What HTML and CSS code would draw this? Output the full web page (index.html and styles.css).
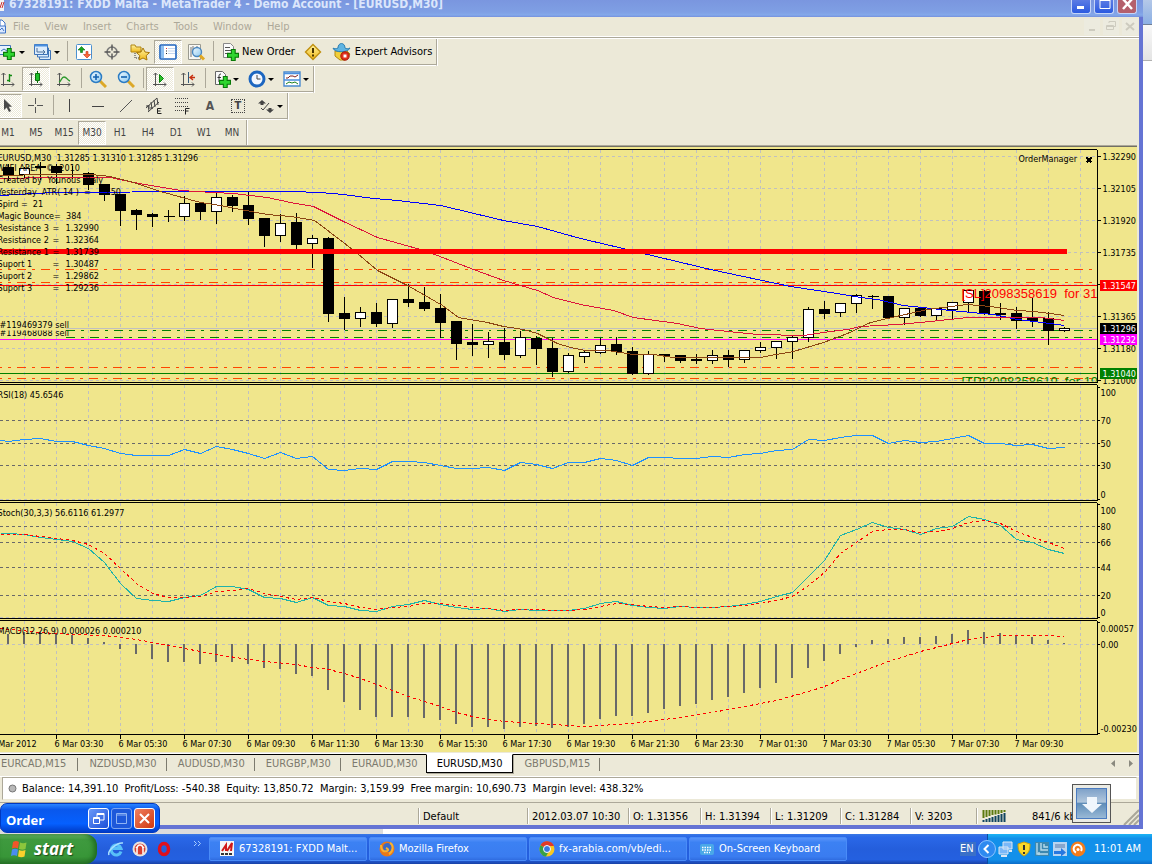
FILE: index.html
```html
<!DOCTYPE html>
<html lang="en">
<head>
<meta charset="utf-8">
<title>67328191: FXDD Malta - MetaTrader 4 - Demo Account - [EURUSD,M30]</title>
<link rel="stylesheet" href="styles.css">
</head>
<body>
<svg class="defs" aria-hidden="true">
  <defs>
    <linearGradient id="glass" x1="0" y1="0" x2="1" y2="1"><stop offset="0" stop-color="#f2fbff"/><stop offset="1" stop-color="#8cc8f0"/></linearGradient>
    <linearGradient id="gold" x1="0" y1="0" x2="0" y2="1"><stop offset="0" stop-color="#fff3a0"/><stop offset="1" stop-color="#f0b818"/></linearGradient>
    <symbol id="plus" viewBox="0 0 11 11"><path d="M4 .5h3.500v3.500h3v3.500H7.500v3H4v-3H.5V4H4z" fill="#2fd52f" stroke="#087a08"/></symbol>
    <symbol id="axes" viewBox="0 0 16 16"><path d="M3.500 15V2M1.500 4l2-2 2 2M1 13.500h13M12 11.500l2 2-2 2" fill="none" stroke="#555"/></symbol>
  </defs>
</svg>
<div class="workspace">
  <main class="app">
    <header class="titlebar">
      <svg width="8" height="12" viewBox="0 0 8 12"><path fill="#f4f4f4" d="M0 0h4v11H0z"/><path d="M0 8l2-6M2 8l2-6" stroke="#c33"/></svg>
      <h1>67328191: FXDD Malta - MetaTrader 4 - Demo Account - [EURUSD,M30]</h1>
      <div class="winbtns">
        <button class="wb" aria-label="Minimize"><svg width="17" height="17"><path d="M4 10h7v3H4z" fill="#fff"/></svg></button>
        <button class="wb" aria-label="Maximize"><svg width="17" height="17"><path d="M4 3.500h10v9H4z" fill="none" stroke="#fff"/><path d="M4 3h10v2H4z" fill="#fff"/></svg></button>
        <button class="wb close" aria-label="Close"><svg width="17" height="17"><path d="M4 3l9 10M13 3L4 13" stroke="#fff" stroke-width="2.500"/></svg></button>
      </div>
    </header>
    <nav class="menubar">
      <svg width="8" height="18" viewBox="0 0 8 18"><path d="M0 2h2l3 3v9H0z" fill="#fff" stroke="#3f74c8"/><path d="M0 8h5.500v7H0" fill="#dbe9ff" stroke="#3f74c8"/><path d="M0 12l2-2 2 3" fill="none" stroke="#3f74c8"/></svg>
      <button>File</button><button>View</button><button>Insert</button><button>Charts</button><button>Tools</button><button>Window</button><button>Help</button>
      <div class="mdi">
        <button aria-label="Minimize chart"><svg width="16" height="16"><path d="M5 10h6v2H5z" fill="#cdcbbf"/></svg></button>
        <button aria-label="Restore chart"><svg width="16" height="16"><path d="M6 4v-1.500h6.500v5H11M3.500 6.500h7v4h-7zM3 7.500h8" fill="none" stroke="#cdcbbf"/></svg></button>
        <button aria-label="Close chart"><svg width="16" height="16"><path d="M4 4l8 7M12 4l-8 7" stroke="#cdcbbf" stroke-width="2"/></svg></button>
      </div>
    </nav>
    <div class="toolbars">
      <div class="toolbar">
        <button class="tb drop" aria-label="New chart"><svg width="18" height="18"><path d="M.5 2.500h11v9H.5z" fill="#e6f2ff" stroke="#3f74b8"/><path d="M2 8l3-2 3 2" fill="none" stroke="#3f74b8"/><use href="#plus" x="4" y="5" width="12" height="12"/></svg></button>
        <button class="tb drop" aria-label="Profiles"><svg width="18" height="18"><g fill="#dcecfc" stroke="#3f74b8"><path d="M5.500 7.500h11v9h-11z"/><path d="M3.500 5h11v9h-11z"/><path d="M.5 1.500h13v10H.5z"/></g><path d="M.5 2.500h13" stroke="#4a90e0" stroke-width="2"/><path d="M3 5v4h8M9 7l2 2-2 2" fill="none" stroke="#4a6f9a"/></svg></button>
        <i class="sep"></i>
        <button class="tb" aria-label="Market Watch"><svg width="18" height="18"><rect x="1.500" y="1.500" width="15" height="15" rx="1" fill="#fff" stroke="#4a90d0"/><path d="M6.500 3.500l3.500 3.500H7.500v2.500h-2V7H3z" fill="#19a51c" stroke="#0a6d10" stroke-width=".6"/><path d="M12 15l-3.500-3.500h2.500V8.500h2v3h2.500z" fill="#ff6a3a" stroke="#c03010" stroke-width=".6"/></svg></button>
        <button class="tb" aria-label="Data Window"><svg width="18" height="18"><circle cx="9" cy="9" r="5" fill="none" stroke="#777" stroke-width="1.500"/><path d="M9 1.500v6M9 10.500v6M1.500 9h6M10.500 9h6" stroke="#555" stroke-width="1.400"/></svg></button>
        <button class="tb" aria-label="Navigator"><svg width="20" height="18"><path d="M1 2h4l1 2h5v5H1z" fill="url(#gold)" stroke="#b08510"/><path d="M5 10v5h4" fill="none" stroke="#333" stroke-dasharray="1 1"/><path d="M13 5l2 4 4.500.6-3.300 3 .8 4.400-4-2-4 2 .8-4.400-3.300-3L11 9z" fill="url(#gold)" stroke="#a87808"/></svg></button>
        <button class="tb on" aria-label="Terminal"><svg width="18" height="18"><rect x="1" y="2" width="16" height="14" rx="1" fill="#fff" stroke="#1f64c0" stroke-width="1.600"/><path d="M2 3h3v12H2z" fill="#8fc0f0"/><path d="M7 5.500h1" stroke="#e03030"/><path d="M7 8h1M7 10.500h1" stroke="#222"/><path d="M9 5.500h7M9 8h7M9 10.500h7" stroke="#c4d6ee"/></svg></button>
        <button class="tb" aria-label="Strategy Tester"><svg width="20" height="18"><path d="M2.500 1.500h12v15h-12z" fill="#f8f8f4" stroke="#9a9a90"/><path d="M5 4v10M7 3v4M11 3v3" stroke="#777"/><circle cx="11" cy="9" r="4.500" fill="url(#glass)" stroke="#4a88c0" stroke-width="1.400"/><path d="M14 12.500l4 4" stroke="#e0a820" stroke-width="3"/></svg></button>
        <i class="sep"></i>
        <button class="tb wide"><svg width="18" height="18"><path d="M2.500.5h7l3 3v11h-10z" fill="#fafafa" stroke="#888"/><path d="M4 4.500h5M4 7.500h7M4 10.500h5" stroke="#555"/><use href="#plus" x="6" y="6" width="12" height="12"/></svg><span>New Order</span></button>
        <button class="tb" aria-label="MetaEditor"><svg width="18" height="18"><path d="M9 1.500L16.500 9 9 16.500 1.500 9z" fill="url(#gold)" stroke="#c09010" stroke-width="1.400"/><path d="M9 5v5M9 11.500v2" stroke="#4a3500" stroke-width="2"/></svg></button>
        <button class="tb wide"><svg width="20" height="18"><path d="M3 8h12l3 3-5 6H8l-5-4z" fill="#f2cf3a" stroke="#b58a10"/><path d="M1 5c1 5 15 5 17 0-2 1-4 1-5 0 0-6-7-6-7 0-2 1-4 1-5 0z" fill="#5fb4e2" stroke="#2d7eb0"/><circle cx="13" cy="13" r="4.200" fill="#e2321c" stroke="#a51505"/><path d="M11.500 11.500h3v3h-3z" fill="#fff"/></svg><span>Expert Advisors</span></button>
      </div>
      <div class="toolbar">
        <button class="tb" aria-label="Bar chart"><svg width="16" height="16"><use href="#axes" width="16" height="16"/><path d="M9.500 3v8M7 9.500h2.500M9.500 4.500H12" stroke="#138a13" stroke-width="1.400"/></svg></button>
        <button class="tb on" aria-label="Candlesticks"><svg width="16" height="16"><use href="#axes" width="16" height="16"/><path d="M9.500 0v12" stroke="#0a700a"/><path d="M7.500 2.500h4v7h-4z" fill="#1fbf2a" stroke="#0a700a"/></svg></button>
        <button class="tb" aria-label="Line chart"><svg width="16" height="16"><use href="#axes" width="16" height="16"/><path d="M3 11c3-1 2-5 5-5s3 3 6 4" fill="none" stroke="#2f9a2f" stroke-width="1.400"/></svg></button>
        <i class="sep"></i>
        <button class="tb" aria-label="Zoom in"><svg width="18" height="18"><path d="M11 11l6 6" stroke="#dca828" stroke-width="3"/><circle cx="7" cy="7" r="5.500" fill="url(#glass)" stroke="#2c7cc4" stroke-width="1.500"/><path d="M4 7h6M7 4v6" stroke="#1462b0" stroke-width="1.600"/></svg></button>
        <button class="tb" aria-label="Zoom out"><svg width="18" height="18"><path d="M11 11l6 6" stroke="#dca828" stroke-width="3"/><circle cx="7" cy="7" r="5.500" fill="url(#glass)" stroke="#2c7cc4" stroke-width="1.500"/><path d="M4 7h6" stroke="#1462b0" stroke-width="1.600"/></svg></button>
        <i class="sep"></i>
        <button class="tb on" aria-label="Auto scroll"><svg width="16" height="16"><use href="#axes" width="16" height="16"/><path d="M7.500 3.500l4 4-4 4z" fill="#2dc02d" stroke="#0a800a"/></svg></button>
        <button class="tb" aria-label="Chart shift"><svg width="16" height="16"><use href="#axes" width="16" height="16"/><path d="M8.500 1v11" stroke="#345a7c"/><path d="M15 6.500h-5M13 4l-3 2.500L13 9" fill="none" stroke="#c83010" stroke-width="1.400"/></svg></button>
        <i class="sep"></i>
        <button class="tb drop" aria-label="Indicators"><svg width="18" height="18"><path d="M2.500 1.500h7l3 3v10h-10z" fill="#fafafa" stroke="#666"/><path d="M8 4c-2 0-2 1-2 3v5M4.500 7.500h3.500" fill="none" stroke="#333"/><use href="#plus" x="6" y="6" width="12" height="12"/></svg></button>
        <button class="tb drop" aria-label="Periods"><svg width="18" height="18"><circle cx="9" cy="9" r="7" fill="#f2f7ff" stroke="#1c66c0" stroke-width="3"/><path d="M9 5v4h3.500" fill="none" stroke="#444"/></svg></button>
        <button class="tb drop" aria-label="Templates"><svg width="18" height="18"><path d="M1 2h16v14H1z" fill="#fff" stroke="#4a8ad0" stroke-width="1.400"/><path d="M1 3.500h16M1 10h16" stroke="#4a90e0" stroke-width="1.400"/><path d="M3 8h2l2-2h3l2 1 3-2" fill="none" stroke="#802020"/><path d="M3 14l3-2 3 1 3-1 3 2" fill="none" stroke="#208020"/></svg></button>
      </div>
      <div class="toolbar">
        <button class="tb on" aria-label="Cursor"><svg width="16" height="16"><path d="M4 1v11l2.700-2.500L9 14l2-1-2.300-4.200H12z" fill="#4a4a4a"/></svg></button>
        <button class="tb" aria-label="Crosshair"><svg width="16" height="16"><path d="M7.500 0v6M7.500 9v6M0 7.500h6M9 7.500h6" stroke="#555"/></svg></button>
        <i class="sep"></i>
        <button class="tb" aria-label="Vertical line"><svg width="16" height="16"><path d="M7.500 1v13" stroke="#444"/></svg></button>
        <button class="tb" aria-label="Horizontal line"><svg width="16" height="16"><path d="M2 8.500h12" stroke="#444"/></svg></button>
        <button class="tb" aria-label="Trendline"><svg width="16" height="16"><path d="M2 14L14 2" stroke="#555"/></svg></button>
        <button class="tb" aria-label="Equidistant channel"><svg width="18" height="18"><path d="M1 11L12 1M3 15L14 5M3 8l1 6M6 5l1 7M9 3l1 7M12 1l1 7M1 9h4M4 11h4" stroke="#444"/><path d="M16.500 11.500h-4v5h4M12.500 14h3" fill="none" stroke="#222"/></svg></button>
        <button class="tb" aria-label="Fibonacci retracement"><svg width="18" height="18"><path d="M2 1.500h14M2 5.500h14M2 9.500h14M2 13.500h9" stroke="#444" stroke-dasharray="1 1"/><path d="M16.500 11.500h-4v6M12.500 14h3" fill="none" stroke="#222"/></svg></button>
        <button class="tb letter">A</button>
        <button class="tb boxed" aria-label="Text label"><b>T</b></button>
        <button class="tb drop" aria-label="Arrows"><svg width="18" height="18"><path d="M5 3l4 3.500H6.500V8h-3V6.500H1zM13 16l-4-3.500h2.500V11h3v1.500H17z" fill="#444"/><path d="M4 11l2 2 6-7" fill="none" stroke="#444"/></svg></button>
      </div>
      <div class="toolbar last">
        <button class="tb">M1</button><button class="tb">M5</button><button class="tb">M15</button><button class="tb on">M30</button><button class="tb">H1</button><button class="tb">H4</button><button class="tb">D1</button><button class="tb">W1</button><button class="tb">MN</button>
      </div>
    </div>
    <section class="chart" aria-label="EURUSD,M30 chart">
      <svg class="plot" id="plot"></svg>
      <svg class="axis" id="axis"></svg>
    </section>
    <nav class="tabs">
      <button>EURCAD,M15</button><button>NZDUSD,M30</button><button>AUDUSD,M30</button><button>EURGBP,M30</button><button>EURAUD,M30</button><button class="active">EURUSD,M30</button><button>GBPUSD,M15</button>
      <span class="scroll"><svg width="24" height="8"><path d="M5 0v7L1 3.500zM19 0v7l4-3.500z" fill="#8a897f"/></svg></span>
    </nav>
    <div class="account"><svg width="9" height="9"><circle cx="4.500" cy="4.500" r="3.500" fill="#b8b8b8" stroke="#777"/></svg><p>Balance: 14,391.10&nbsp; Profit/Loss: -540.38&nbsp; Equity: 13,850.72&nbsp; Margin: 3,159.99&nbsp; Free margin: 10,690.73&nbsp; Margin level: 438.32%</p></div>
    <footer class="status">
      <span class="s-help"></span><span class="s-prof">Default</span><span class="s-date">2012.03.07 10:30</span><span class="s-val">O: 1.31356</span><span class="s-val">H: 1.31394</span><span class="s-val">L: 1.31209</span><span class="s-val">C: 1.31284</span><span class="s-vol">V: 3203</span>
      <span class="s-conn"><svg width="24" height="13"><path d="M1.500 0v8M4.500 0v7M7.500 0v6M10.500 0v5M13.500 0v4.500M16.500 0v4M19.500 0v3M22.500 0v2" stroke="#5c7a10" stroke-width="2"/><path d="M1.500 10v2M4.500 9v3M7.500 8v4M10.500 7v5M13.500 6v6M16.500 5v7M19.500 4v8M22.500 3v9" stroke="#104560" stroke-width="2"/></svg><em>841/6 kb</em></span>
      <svg class="grip" width="16" height="16"><path d="M1 16L16 1M6 16L16 6M11 16l5-5" stroke="#a9a799" stroke-width="2"/></svg>
    </footer>
    <button class="download" aria-label="Download"><svg width="32" height="32"><path d="M11 9h10v7h5L16 25 6 16h5z" fill="#f0f6fc"/></svg></button>
    <aside class="order"><h2>Order</h2>
      <button aria-label="Restore"><svg width="19" height="19"><path d="M8 8V4.500h7V11h-4M4.500 8.500h6v6h-6zM4 9.500h7M8 5.500h7" fill="none" stroke="#fff"/></svg></button>
      <button class="dim" aria-label="Maximize"><svg width="19" height="19"><path d="M4.500 4.500h10v10h-10zM4 6h11" fill="none" stroke="#8fb4f4"/></svg></button>
      <button class="x" aria-label="Close"><svg width="19" height="19"><path d="M5 5l9 9M14 5l-9 9" stroke="#fff" stroke-width="2"/></svg></button>
    </aside>
  </main>
  <div class="behind"><i></i><b></b></div>
</div>
<div class="strip"></div>
<footer class="taskbar">
  <button class="start"><svg width="20" height="20"><path d="M3 3c3-1.500 4-1 6 0L8 9.500C6 8.500 4.500 8.500 2 9.500z" fill="#f0562a"/><path d="M10 3.500c2 1 4 1 6.500 0L15.500 10c-2 1-4 1-6.500 0z" fill="#8cc63c"/><path d="M2 10.500c2-1 4-1 6 0L7 17c-2-1-4-1-6 0z" fill="#4a8cf0"/><path d="M9 11c2 1 4 1 6.500 0l-1 6.500c-2 1-4 1-6.500 0z" fill="#fbd02c"/></svg><span>start</span></button>
  <div class="quick">
    <button aria-label="Internet Explorer"><svg width="16" height="16"><path d="M13 10.500A5 5 0 1 1 13 7.500H4.500" fill="none" stroke="#58c0f8" stroke-width="3"/><path d="M1 14C-1 10 9 1 15 2" fill="none" stroke="#a8e0ff" stroke-width="1.500"/></svg></button>
    <button aria-label="Toolbar app"><svg width="16" height="16"><circle cx="8" cy="8" r="7.500" fill="#e8e4e0"/><circle cx="8" cy="8" r="5.500" fill="#d84030"/><path d="M5 13V8c0-2 1-4 3-4s3 2 3 4v5M4 7l2-2M12 7l-2-2" fill="none" stroke="#fff" stroke-width="1.500"/></svg></button>
    <button aria-label="Opera"><svg width="16" height="16"><ellipse cx="8" cy="8" rx="4.500" ry="5.500" fill="none" stroke="#e0101c" stroke-width="3.500"/></svg></button>
    <svg class="more" width="9" height="7"><path d="M1 1l2.500 2.500L1 6M5 1l2.500 2.500L5 6" fill="none" stroke="#a8ccff"/></svg>
  </div>
  <div class="tasks">
    <button><svg width="16" height="16"><path d="M1 0h14v15H1z" fill="#f4f4f4"/><path d="M3 10l4-6v6M8 10l5-8-1 8" stroke="#d01818" stroke-width="2" fill="none"/><path d="M2 13h12" stroke="#333" stroke-dasharray="3 1" stroke-width="2"/></svg><span>67328191: FXDD Malt...</span></button>
    <button><svg width="16" height="16"><circle cx="8" cy="8" r="7.500" fill="#e8781a"/><circle cx="8.500" cy="6.500" r="4.500" fill="#3a6ac8"/><path d="M2 4c0 6 3 7 6 6 2-1 1-2-1-3M11 2c4 2 3 9-1 11" fill="none" stroke="#f8b030" stroke-width="2"/></svg><span>Mozilla Firefox</span></button>
    <button><svg width="16" height="16"><circle cx="8" cy="8" r="7.500" fill="#f8c820"/><path d="M8 8L1.500 4.200A7.500 7.500 0 0 1 15 5H8z" fill="#e03a28"/><path d="M8 8L1.500 4.200A7.500 7.500 0 0 0 7 15.500L10 10z" fill="#38a048"/><circle cx="8" cy="8" r="3.500" fill="#3a78e0" stroke="#fff"/></svg><span>fx-arabia.com/vb/edi...</span></button>
    <button><svg width="16" height="16"><rect x="1" y="3" width="14" height="11" rx="2" fill="#4aa8e8"/><path d="M3 6.500h10M3 9h10M5 11.500h6" stroke="#fff" stroke-width="1.500" stroke-dasharray="1.500 1"/></svg><span>On-Screen Keyboard</span></button>
  </div>
  <span class="lang">EN</span>
  <div class="tray">
    <button class="hide" aria-label="Hide icons"><svg width="18" height="18"><circle cx="9" cy="9" r="8.500" fill="#2d8af0" stroke="#8cc4ff"/><path d="M10.500 5L6.500 9l4 4" fill="none" stroke="#fff" stroke-width="2"/></svg></button>
    <svg width="16" height="16"><path d="M5 1h9v7H5zM1 6h9v7H1z" fill="#7ab8f8" stroke="#dce8f4"/><path d="M3 15h6M11 10h3" stroke="#dce8f4" stroke-width="2"/></svg>
    <svg width="16" height="16"><path d="M8 1l6 2c0 6-1 9-6 12C3 12 2 9 2 3z" fill="#fbd828" stroke="#c8a010"/><path d="M8 4v5M8 11v2" stroke="#333" stroke-width="2"/></svg>
    <svg width="16" height="16"><path d="M1 1h14v14H1z" fill="#3c88b0"/><path d="M3 2v11h11M7 2v7h7M10 3v3h4M5 11v3" fill="none" stroke="#b8dcec" stroke-width="1.400"/></svg>
    <svg width="16" height="16"><path d="M1 1h14v14H1z" fill="#b8d4f0"/><path d="M3 4h10M3 6h10" stroke="#5878a8"/><path d="M2 10h7V7l5 4.500-5 4V13H2z" fill="#2878e0"/></svg>
    <svg width="16" height="16"><circle cx="8" cy="8" r="7.500" fill="#f47c1c"/><path d="M6 11.500a4 4 0 1 1 5-1.500" fill="none" stroke="#fff" stroke-width="2"/><circle cx="8" cy="8.500" r="1.500" fill="#fff"/></svg>
    <time>11:01 AM</time>
  </div>
</footer>
<script src="chart.js"></script>
</body>
</html>
```
FILE: styles.css
```css
* { box-sizing: border-box; }
html { overflow: hidden; }
body {
  margin: 0;
  min-height: 100vh;
  display: flex;
  flex-direction: column;
  background: #fff;
  color: #000;
  font: 11px/14px "DejaVu Sans Condensed", "Liberation Sans", sans-serif;
  overflow: hidden;
}
button { font: inherit; color: inherit; background: none; border: 0; padding: 0; margin: 0; }
svg { display: block; flex: none; }
h1, h2, p { margin: 0; }
.defs { position: absolute; width: 0; height: 0; }
.workspace { display: flex; flex: 1; }
.app {
  position: relative;
  flex: 1;
  min-width: 0;
  display: flex;
  flex-direction: column;
  background: #ece9d8;
  border-right: 4px solid #6574d4;
  border-bottom: 4px solid #6574d4;
}
.behind { width: 9px; display: flex; flex-direction: column; background: #fff; }
.behind i { height: 25px; background: linear-gradient(#b4c8e8, #8cb0e4); border-bottom: 1px solid #6f7f95; }
.behind b { height: 36px; background: linear-gradient(#f8f8f8, #e4e4e4); border-bottom: 1px solid #b0b0b0; }

.titlebar {
  display: flex;
  height: 17px;
  margin-right: -4px;
  padding-right: 6px;
  background: linear-gradient(#7a96df, #7f9fe4 70%, #84a9ea 88%, #7590dd);
}
.titlebar h1 {
  flex: 1;
  padding-left: 1px;
  font: bold 12px/15px "DejaVu Sans Condensed", "Liberation Sans", sans-serif;
  height: 17px;
  margin-top: -3px;
  color: #dbe6fb;
  white-space: nowrap;
}
.winbtns { display: flex; gap: 3px; }
.wb { width: 20px; height: 14px; display: flex; align-items: flex-end; justify-content: center; overflow: hidden; background: linear-gradient(#5c7ce4, #2b5ae0); border: 1px solid #c4d4f8; border-top: 0; border-radius: 0 0 3px 3px; }
.wb.close { background: #b4606c; }

.menubar {
  display: flex;
  align-items: center;
  gap: 15px;
  height: 19px;
  padding-top: 1px;
  color: #aca899;
}
.menubar > svg { margin-right: -10px; }
.mdi { margin-left: auto; display: flex; gap: 3px; padding-right: 1px; }
.mdi button { background: #ecebdf; }

.toolbars { border-top: 1px solid #fff; box-shadow: inset 0 1px #aca899, inset 0 2px #fff; padding-top: 2px; overflow: hidden; }
.toolbar {
  display: flex;
  width: max-content;
  margin-left: -6px;
  height: 27px;
  border-right: 1px solid #aca899;
  border-bottom: 1px solid #fff;
  box-shadow: inset 0 -1px #aca899, 1px 0 #fff;
  padding: 1px 0;
}
.toolbar.last { height: 25px; border-bottom: 0; box-shadow: 1px 0 #fff; padding-bottom: 0; font-size: 10px; color: #444; }
.tb { width: 28px; height: 24px; display: flex; align-items: center; justify-content: center; }
.tb.on {
  border: 1px solid #aca899;
  border-right-color: #fff;
  border-bottom-color: #fff;
  background: repeating-conic-gradient(#fff 0 25%, #ece9d8 0 50%) 0 0 / 2px 2px;
}
.tb.drop { width: 35px; justify-content: flex-start; padding-left: 5px; gap: 2px; }
.tb.drop::after { content: ""; border: 3px solid transparent; border-top-color: #000; border-bottom: 0; }
.tb.wide { width: auto; padding: 0 4px 0 5px; gap: 3px; }
.tb.letter { font-weight: bold; font-size: 12px; color: #555; }
.tb.boxed b { width: 14px; height: 14px; line-height: 12px; border: 1px dotted #444; color: #444; }
.sep { width: 6px; margin: 1px 0 3px; background: linear-gradient(#aca899, #aca899) 3px 0 / 1px 100% no-repeat; }

.chart {
  display: flex;
  height: 607px;
  margin-right: 2px;
  border-top: 1px solid #aca899;
  box-shadow: inset 0 1px #716f64;
  padding-top: 1px;
  background: #f0e68c;
}
.plot { flex: 1; min-width: 0; width: 0; height: 605px; overflow: hidden; }
.axis { width: 40px; height: 605px; overflow: hidden; }
.plot text, .axis text { font: 9px "DejaVu Sans Condensed", "Liberation Sans", sans-serif; white-space: pre; }
.plot text.tag { font: 13px "Liberation Sans", Arial, sans-serif; }

.tabs {
  display: flex;
  height: 23px;
  margin-top: 2px;
  border-top: 1px solid #000;
  border-bottom: 1px solid #fff;
  color: #7c7a6e;
  box-shadow: 0 -1px #fff;
}
.tabs button { height: 17px; padding: 0 10px 0 11px; background: linear-gradient(#7c7a6e, #7c7a6e) right 3px / 1px 13px no-repeat; }
.tabs button:first-child { padding-left: 1px; padding-right: 12px; }
.tabs button:nth-child(5) { background: none; padding-right: 8px; }
.tabs button.active { height: 19px; margin-top: -1px; color: #000; background: #fff; border: 1px solid #000; border-top-color: #fff; box-shadow: 1px 1px #aca899; padding: 0 10px; }
.tabs button:last-of-type { padding: 0 10px 0 11px; }
.scroll { margin: 5px 5px 0 auto; }
.account {
  display: flex;
  align-items: center;
  gap: 5px;
  height: 23px;
  margin: 0 2px;
  padding-left: 5px;
  background: #fff;
  border: 1px solid #aca899;
  border-right-color: #ece9d8;
  border-bottom-color: #ece9d8;
  white-space: nowrap;
}
.status { display: flex; align-items: center; height: 23px; margin-top: 2px; padding-top: 4px; border-top: 1px solid #aca899; white-space: nowrap; }
.status span { height: 16px; line-height: 17px; padding-left: 4px; border-right: 1px solid #aca899; box-shadow: 1px 0 #fff; }
.status .s-help { width: 419px; flex: 0 1 419px; }
.s-prof { width: 109px; }
.s-date { width: 101px; }
.s-val { width: 72px; }
.s-val:nth-of-type(n+5) { width: 70px; }
.status .s-vol { width: 66px; }
.status .s-conn { display: flex; align-items: center; gap: 26px; flex: 1; border: 0; padding-left: 5px; box-shadow: none; }
.status em { font-style: normal; }
.grip { align-self: flex-end; }
.download { position: absolute; right: 28px; bottom: 2px; width: 39px; height: 39px; padding: 3px; background: #ebebe4; border: 1px solid #555; }
.download svg { background: linear-gradient(#7b9fc8, #b0c6dc 45%, #5f8db8 50%, #9dbcd8); outline: 1px solid #4a7bc0; outline-offset: -1px; width: 31px; height: 31px; }
.order {
  position: absolute;
  left: 0;
  bottom: -8px;
  width: 160px;
  height: 30px;
  display: flex;
  align-items: center;
  gap: 2px;
  padding: 0 4px 0 5px;
  border: 1px solid #0038c0;
  border-radius: 7px;
  color: #fff;
  background: linear-gradient(#2a84ff, #0a58ec 20%, #0560ff 70%, #003cc8);
}
.order h2 { flex: 1; padding-top: 3px; font: bold 13px/18px "Open Sans", sans-serif; }
.order button { width: 21px; height: 21px; border: 1px solid #fff; border-radius: 3px; background: linear-gradient(135deg, #6a98f8, #1c50d8); }
.order .dim { border-color: #7ca4f0; background: #1d58da; }
.order .x { background: linear-gradient(135deg, #f08060, #d03810); }
.strip { height: 5px; background: linear-gradient(#dcdcdc, #dcdcdc) 0 0 / 383px 100% no-repeat #fff; }

.taskbar { display: flex; height: 30px; color: #fff; background: linear-gradient(#3a78e4, #2a68e8 10%, #245edc 50%, #2460e0 85%, #1941a5); }
.start { display: flex; align-items: center; gap: 4px; width: 97px; padding-left: 10px; border-radius: 0 12px 12px 0; background: linear-gradient(#70b870, #3f9a3f 18%, #389638 75%, #2a762a); box-shadow: inset -3px 0 5px #1f6a1f; }
.start span { font: italic bold 17px/22px "Open Sans", sans-serif; text-shadow: 1px 1px 1px #1b4d1b; }
.quick { display: flex; align-items: center; gap: 8px; width: 111px; padding-left: 11px; }
.more { margin: -12px 0 0 13px; }
.tasks { display: flex; flex: 1; gap: 2px; padding: 3px 0 3px 1px; min-width: 0; }
.tasks button { display: flex; align-items: center; gap: 4px; width: 158px; padding-left: 9px; border: 1px solid #4a8cf8; border-radius: 2px; background: linear-gradient(#5a94fa, #3c81f3 20%, #3a7cf0 85%, #2f6ce0); }
.tasks span { white-space: nowrap; }
.lang { align-self: center; width: 16px; margin-right: 11px; background: #3a70c8; }
.tray { display: flex; align-items: center; gap: 2px; width: 165px; background: linear-gradient(#1cb4f4, #1290ea 15%, #1290ea 85%, #0c6cc8); border-left: 1px solid #0a4ea0; }
.tray .hide { margin-left: -10px; }
.tray time { margin-left: 6px; white-space: nowrap; }
```
FILE: chart.js
```js
// Draws the price, RSI, stochastic and MACD panes.
const NS = 'http://www.w3.org/2000/svg';
const TOP = 147;
const STEP = 16, FIRST = 8, LAST_X = 1097;

// Candles: colour, high, open/close top, open/close bottom, low.
const candles = [
  'b163,167,175,180','w166,168,175,178','b161,166,168,179','b163,166,173,183','b165,174,175,178','b171,173,185,189',
  'b184,184,195,200','b194,194,211,225','b208,210,215,229','b212,214,217,226','b209,216,217,221','w195,203,217,220',
  'b201,203,212,219','w191,197,212,223','b194,197,206,211','b191,205,219,224','b218,218,236,246','w213,223,236,241',
  'b212,222,245,249','w234,238,244,267','b236,238,314,321','b296,313,319,329','w306,312,319,326','b302,312,324,326',
  'w298,299,324,327','b283,299,303,306','b286,302,309,310','b293,308,323,337','b321,321,344,359','b323,342,345,355',
  'w331,341,345,357','b327,342,355,359','w330,337,356,357','b335,338,349,364','b337,348,372,376','w352,355,372,372',
  'w349,352,357,362','w337,345,353,353','b336,344,352,354','b346,351,374,374','w350,354,374,374','b353,354,356,361',
  'b354,355,361,362','b353,359,361,363','w349,355,361,363','b349,355,360,366','w350,350,360,362','w341,347,351,352',
  'w340,341,348,358','w334,337,342,358','w306,309,338,341','b300,309,314,318','w303,303,313,316','w293,295,304,312',
  'b294,296,297,308','b296,296,318,318','w307,308,318,324','b306,308,316,316','w308,308,316,319','w301,302,310,319',
  'w290,290,303,312','b289,291,314,314','b302,313,315,319','b306,313,321,328','b297,318,321,326','b311,318,331,344',
  'w326,328,331,331'
];
const blue = '0,195 33,193 57,192 207,191 290,191 320,192 343,194 373,198 397,200 440,205 457,209 503,220 537,226 580,238 627,249 647,254 710,269 790,286 830,292 860,297 877,299 903,305 950,310 993,314 1017,319 1050,323 1064,325';
const crimson = '0,178 50,177 110,177 133,182 180,190 213,192 233,193 267,197 290,202 313,206 343,221 377,237 420,249 437,255 473,269 503,280 537,290 553,297 580,304 613,310 633,317 677,323 700,328 737,332 757,334 803,335 823,332 847,329 860,326 897,324 930,321 967,317 1040,317 1064,320';
const brown = '0,175 47,174 90,174 110,176 133,182 160,191 200,202 220,205 240,209 267,214 290,216 314,220 343,242 357,253 377,270 407,285 442,305 458,317 487,322 503,326 523,329 537,333 557,343 570,347 585,350 607,350 633,354 653,354 673,357 760,357 770,355 793,351 823,342 847,333 870,322 887,318 927,309 950,306 967,304 990,306 1017,310 1033,311 1050,313 1064,315';
const rsi = [441,439,438,441,441,445,448,453,455,455,455,449,453,446,449,453,458,452,458,456,469,470,468,469,461,461,462,465,468,468,467,470,462,464,468,462,462,458,460,465,457,457,458,458,456,457,454,453,450,449,439,440,437,435,435,443,440,442,441,438,435,443,443,445,444,448,447];
const stoch = [533,534,537,539,541,548,562,583,598,600,601,597,595,586,586,589,597,598,602,597,605,606,610,611,606,604,600,604,607,609,608,611,609,610,610,610,608,603,601,605,607,608,606,607,607,606,604,601,596,592,576,560,535,529,522,527,529,534,528,526,516,519,525,539,542,549,553];
const signal = [534,534,536,538,540,544,553,568,583,593,597,597,596,591,590,588,593,596,599,597,601,603,607,609,607,606,603,603,605,607,608,610,609,609,610,610,609,606,603,604,606,607,606,607,607,606,605,603,600,596,585,572,553,542,531,529,529,532,531,528,522,520,523,531,537,542,548];
const macd = [634,632,632,633,635,638,642,649,654,659,662,662,664,662,662,664,668,669,674,676,690,702,710,717,717,717,718,720,724,727,727,729,727,726,728,727,724,719,716,716,713,709,706,704,700,697,693,688,683,678,668,661,654,647,640,639,637,637,636,634,630,632,633,635,637,640,643];
const macdSignal = '0,628 40,632 72,634 104,635 120,637 136,639 152,642 168,645 184,648 200,651 216,654 248,659 264,661 296,664 312,667 328,669 344,673 360,678 376,684 392,690 408,696 424,701 440,706 456,712 472,716 488,719 504,721 536,723 568,725 584,726 600,725 632,723 648,721 680,717 712,712 744,706 776,700 808,691 824,686 840,679 856,673 872,667 888,661 904,656 920,651 936,647 952,643 968,639 984,637 1000,635 1048,635 1064,636';

function add(parent, tag, attrs, text) {
  const el = document.createElementNS(NS, tag);
  for (const k in attrs) el.setAttribute(k, attrs[k]);
  if (text) el.textContent = text;
  parent.appendChild(el);
  return el;
}
function layer(id) {
  // Half-pixel shift puts one-pixel strokes on whole pixels.
  return add(document.getElementById(id), 'g', { transform: `translate(.5 ${-TOP + .5})`, 'shape-rendering': 'crispEdges', fill: 'none' });
}
function hline(g, y, color, dash, x1 = -1, width = 1, x2 = 4000) {
  const a = { x1, y1: y, x2, y2: y, stroke: color, 'stroke-width': width };
  if (dash) a['stroke-dasharray'] = dash;
  return add(g, 'line', a);
}
function vline(g, x, y1, y2, color, dash) {
  const a = { x1: x, y1, x2: x, y2, stroke: color };
  if (dash) a['stroke-dasharray'] = dash;
  add(g, 'line', a);
}
function label(g, x, y, text, fill = '#000') {
  return add(g, 'text', { x, y: y - 1, fill }, text);
}
const poly = (g, points, stroke, dash) => add(g, 'polyline', { points, stroke, 'stroke-dasharray': dash || 'none' });
const series = (values) => values.map((y, i) => `${FIRST + i * STEP},${y}`).join(' ');

const g = layer('plot');
const panes = [[149, 382], [384, 500], [502, 618], [620, 734]];

// Grid
for (let x = 24; x < LAST_X; x += 32) panes.forEach(([a, b]) => vline(g, x, a, b, '#c0c0c0', '3 3'));
for (let y = 156; y <= 380; y += 32) hline(g, y, '#c0c0c0', '3 3');
[499, 617, 644].forEach((y) => hline(g, y, '#c0c0c0', '3 3'));
[420, 443, 465, 526, 542, 567, 595].forEach((y) => hline(g, y, '#696969', '3 3'));

// Price levels
const dashDot = '9 6 3 6';
[[269, '#ff4500'], [282, '#ff4500'], [330, '#008000'], [337, '#008000'], [367, '#ff4500'], [378, '#ff4500']]
  .forEach(([y, c]) => hline(g, y, c, dashDot, y > 325 && y < 340 ? 65 : -7, 1, 1091));
hline(g, 285, '#ff0000');
hline(g, 328, '#c0c0c0', null, 65);
hline(g, 339, '#ff00ff');
hline(g, 373, '#008000');

// Candles
candles.forEach((c, i) => {
  const [hi, top, bot, lo] = c.slice(1).split(',').map(Number);
  const x = FIRST + i * STEP;
  const height = bot - top - 1;
  vline(g, x, hi, lo, '#000');
  if (height < 1) hline(g, top, '#000', null, x - 5, 1, x + 6);
  else add(g, 'rect', { x: x - 5, y: top, width: 10, height, fill: c[0] === 'b' ? '#000' : '#fff', stroke: '#000' });
});
poly(g, blue, '#0000ff');
poly(g, crimson, '#dc143c');
poly(g, brown, '#8b4513');
hline(g, 251, '#ff0000', null, -1, 5, 1066);

// Indicators
poly(g, '0,440 ' + series(rsi), '#1e90ff');
poly(g, '0,533 ' + series(stoch), '#20b2aa');
poly(g, '0,534 ' + series(signal), '#ff0000', '3 3');
macd.forEach((y, i) => add(g, 'line', { x1: FIRST + i * STEP - .5, x2: FIRST + i * STEP - .5, y1: 643.5, y2: y - .5, stroke: '#696969', 'stroke-width': 2 }));
poly(g, macdSignal, '#ff0000', '3 3');

// Pane frames and time scale
panes.forEach(([a, b]) => { hline(g, a, '#000'); hline(g, b, '#000'); });
label(g, -10, 747, '5 Mar 2012');
const times = ['6 Mar 03:30', '6 Mar 05:30', '6 Mar 07:30', '6 Mar 09:30', '6 Mar 11:30', '6 Mar 13:30', '6 Mar 15:30', '6 Mar 17:30', '6 Mar 19:30', '6 Mar 21:30', '6 Mar 23:30', '7 Mar 01:30', '7 Mar 03:30', '7 Mar 05:30', '7 Mar 07:30', '7 Mar 09:30'];
times.forEach((t, i) => {
  vline(g, 56 + i * 64, 734, 738, '#000');
  label(g, 54 + i * 64, 747, t);
});

// Comment block
label(g, -3, 161, 'EURUSD,M30  1.31285 1.31310 1.31285 1.31296');
label(g, -4, 171, 'WAFI AREA  ©  2010');
label(g, -3, 183, 'Created by  Younous  Italy');
label(g, -3, 195, 'Yesterday  ATR( 14 )  =');
label(g, 105, 195, '150');
label(g, -3, 207, 'Spird =  21');
label(g, -3, 219, 'Magic Bounce=  384');
[['Resistance 3', '1.32990'], ['Resistance 2', '1.32364'], ['Resistance 1', '1.31739'], ['Suport 1', '1.30487'], ['Suport 2', '1.29862'], ['Suport 3', '1.29236']]
  .forEach(([name, value], i) => {
    const y = 231 + i * 12;
    label(g, -3, y, name);
    label(g, 52, y, '=');
    label(g, 65, y, value);
  });
const defs = add(g, 'defs', {});
add(add(defs, 'clipPath', { id: 'above' }), 'rect', { x: 0, y: 149, width: 4000, height: 232 });
add(add(defs, 'clipPath', { id: 'below' }), 'rect', { x: 0, y: 330, width: 200, height: 20 });
label(g, -1, 328, '#119469379 sell');
label(g, -1, 336, '#119468088 sell').setAttribute('clip-path', 'url(#below)');
label(g, -3, 398, 'RSI(18) 45.6546');
label(g, -3, 516, 'Stoch(30,3,3) 56.6116 61.2977');
label(g, -3, 634, 'MACD(12,26,9) 0.000026 0.000210');
label(g, 1018, 162, 'OrderManager');
add(g, 'path', { d: 'M1086 157l5 5M1091 157l-5 5', stroke: '#000', 'stroke-width': 2 });
label(g, 961, 298, '[SL]2098358619  for 31.', '#ff0000').setAttribute('class', 'tag');
const tp = label(g, 961, 386, '[TP]2098358619  for 19', '#008000');
tp.setAttribute('class', 'tag');
tp.setAttribute('clip-path', 'url(#above)');

// Value axis
const a = layer('axis');
panes.forEach(([y1, y2]) => vline(a, 0, y1, y2, '#000'));
const prices = ['1.32290', '1.32105', '1.31920', '1.31735', '', '1.31365', '1.31180', '1.31000'];
prices.forEach((p, i) => {
  hline(a, 156 + i * 32, '#000', null, 0, 1, 3);
  label(a, 5, 160 + i * 32, p);
});
[['100', 396, 387], ['70', 424, 420], ['50', 447, 443], ['30', 469, 465], ['0', 498, 499], ['100', 514, 504], ['80', 530, 526], ['66', 546, 542], ['44', 571, 567], ['20', 599, 595], ['0', 616, 617], ['0.00057', 632, 622], ['0.00', 648, 644], ['-0.00230', 732, 733]]
  .forEach(([t, y, tick]) => {
    hline(a, tick, '#000', null, 0, 1, 2);
    label(a, 3, y, t);
  });
[['1.31547', 284, '#ff0000'], ['1.31296', 327, '#000'], ['1.31232', 338, '#ff00ff'], ['1.31040', 372, '#008000']]
  .forEach(([t, y, c]) => {
    add(a, 'rect', { x: 2, y: y - 5, width: 40, height: 11, fill: c });
    label(a, 5, y + 5, t, '#fff');
  });
```
